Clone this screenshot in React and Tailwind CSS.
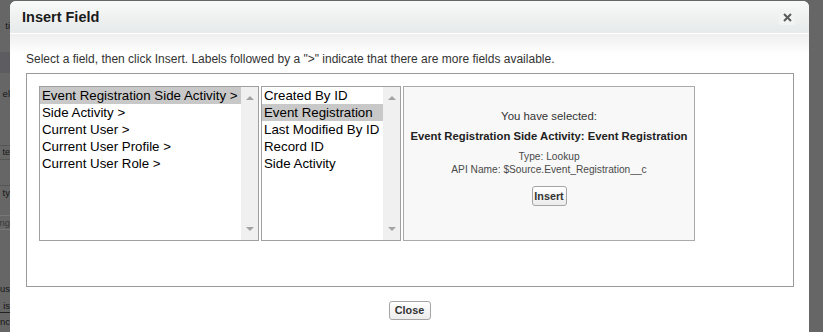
import React from 'react'

const parents = [
  'Event Registration Side Activity >',
  'Side Activity >',
  'Current User >',
  'Current User Profile >',
  'Current User Role >',
]

const fields = [
  'Created By ID',
  'Event Registration',
  'Last Modified By ID',
  'Record ID',
  'Side Activity',
]

function ScrollBar() {
  return (
    <div className="w-[17px] h-full bg-[#f0f0f0] flex flex-col items-center justify-between py-[8px]">
      <svg width="8" height="5" viewBox="0 0 8 5">
        <path d="M0 5 L4 1 L8 5 Z" fill="#a3a3a3" />
      </svg>
      <svg width="8" height="5" viewBox="0 0 8 5">
        <path d="M0 0 L4 4 L8 0 Z" fill="#a3a3a3" />
      </svg>
    </div>
  )
}

function ListBox({ items, selected, width }) {
  return (
    <div className={`${width} h-[155px] border border-[#a0a0a0] bg-white flex shrink-0`}>
      <div className="flex-1 min-w-0">
        {items.map((item, i) => (
          <div
            key={item}
            className={`h-[17px] leading-[17px] pl-[2px] text-[13.3px] text-black whitespace-nowrap overflow-hidden ${
              i === selected ? 'bg-[#c8c8c8]' : ''
            }`}
          >
            {item}
          </div>
        ))}
      </div>
      <ScrollBar />
    </div>
  )
}

export default function App() {
  return (
    <div className="relative w-[823px] h-[332px] overflow-hidden bg-[#666666] font-['Liberation_Sans',Arial,sans-serif]">
      {/* page behind the overlay, only its right edge shows on the left */}
      <div className="w-[10px] h-full flex flex-col items-end text-[9.5px] text-[#161616] whitespace-nowrap">
        <div className="mt-[20px] leading-[12px]">ti</div>
        <div className="mt-[20px] h-[21px] w-full bg-[#5d5d61]" />
        <div className="mt-[15px] leading-[12px]">el</div>
        <div className="mt-[45px] w-full h-[15px] border-y border-[#555] text-[9px] leading-[13px] flex justify-end">te</div>
        <div className="mt-[25px] w-full border-t border-[#555] leading-[13px] flex justify-end">ty</div>
        <div className="mt-[16px] w-full h-[15px] border-y border-[#777] leading-[13px] text-[#3a3a3a] flex justify-end">ng</div>
        <div className="mt-[52px] leading-[13px]">us</div>
        <div className="mt-[5px] w-full border-b border-[#222] leading-[12px] flex justify-end">is</div>
        <div className="mt-[3px] leading-[12px]">nc</div>
      </div>

      {/* modal */}
      <div className="absolute left-[10px] top-[1px] w-[799px] h-[345px] bg-white rounded-t-[6px] overflow-hidden">
        <div className="h-[33px] border-b border-white bg-gradient-to-b from-[#f8f9f9] to-[#e7eaea] flex items-center justify-between pl-[12px] pr-[14px]">
          <h2 className="text-[14.5px] font-bold text-[#1a1a1a] pt-[1px]">Insert Field</h2>
          <button className="w-[16px] h-[16px] bg-[#f2f4f4] rounded-[2px] flex items-center justify-center">
            <svg width="9" height="9" viewBox="0 0 9 9">
              <path d="M1 1 L8 8 M8 1 L1 8" stroke="#5a5a5a" strokeWidth="2" />
            </svg>
          </button>
        </div>

        <div className="bg-[linear-gradient(to_bottom,#efefef,#ffffff_20px)] px-[16px] pt-[18px]">
          <p className="text-[12px] leading-[14px] text-[#333]">
            Select a field, then click Insert. Labels followed by a "&gt;" indicate that there are more fields available.
          </p>

          <div className="mt-[7px] w-[768px] h-[214px] border border-[#9a9a9a] pt-[12px] pl-[12px]">
            <div className="flex">
              <ListBox items={parents} selected={0} width="w-[220px]" />
              <ListBox items={fields} selected={1} width="ml-[2px] w-[140px]" />
              <div className="ml-[2px] w-[292px] h-[155px] border border-[#aaaaaa] bg-[#f8f8f8] flex flex-col items-center pt-[22px]">
                <div className="text-[11.4px] leading-[14px] text-[#333]">You have selected:</div>
                <div className="mt-[6px] text-[11.3px] leading-[14px] font-bold text-[#222]">
                  Event Registration Side Activity: Event Registration
                </div>
                <div className="mt-[7px] text-[10.2px] leading-[13px] text-[#4a4a4a]">Type: Lookup</div>
                <div className="text-[10.2px] leading-[13px] text-[#4a4a4a]">API Name: $Source.Event_Registration__c</div>
                <button className="mt-[10px] w-[35px] h-[20px] rounded-[3px] border border-[#a5a5a5] bg-gradient-to-b from-white to-[#ececec] text-[10.8px] font-bold text-[#333]">
                  Insert
                </button>
              </div>
            </div>
          </div>

          <div className="mt-[14px] flex justify-center">
            <button className="w-[42px] h-[19px] rounded-[3px] border border-[#a5a5a5] bg-gradient-to-b from-white to-[#ececec] text-[10.8px] font-bold text-[#333]">
              Close
            </button>
          </div>
        </div>
      </div>
    </div>
  )
}
